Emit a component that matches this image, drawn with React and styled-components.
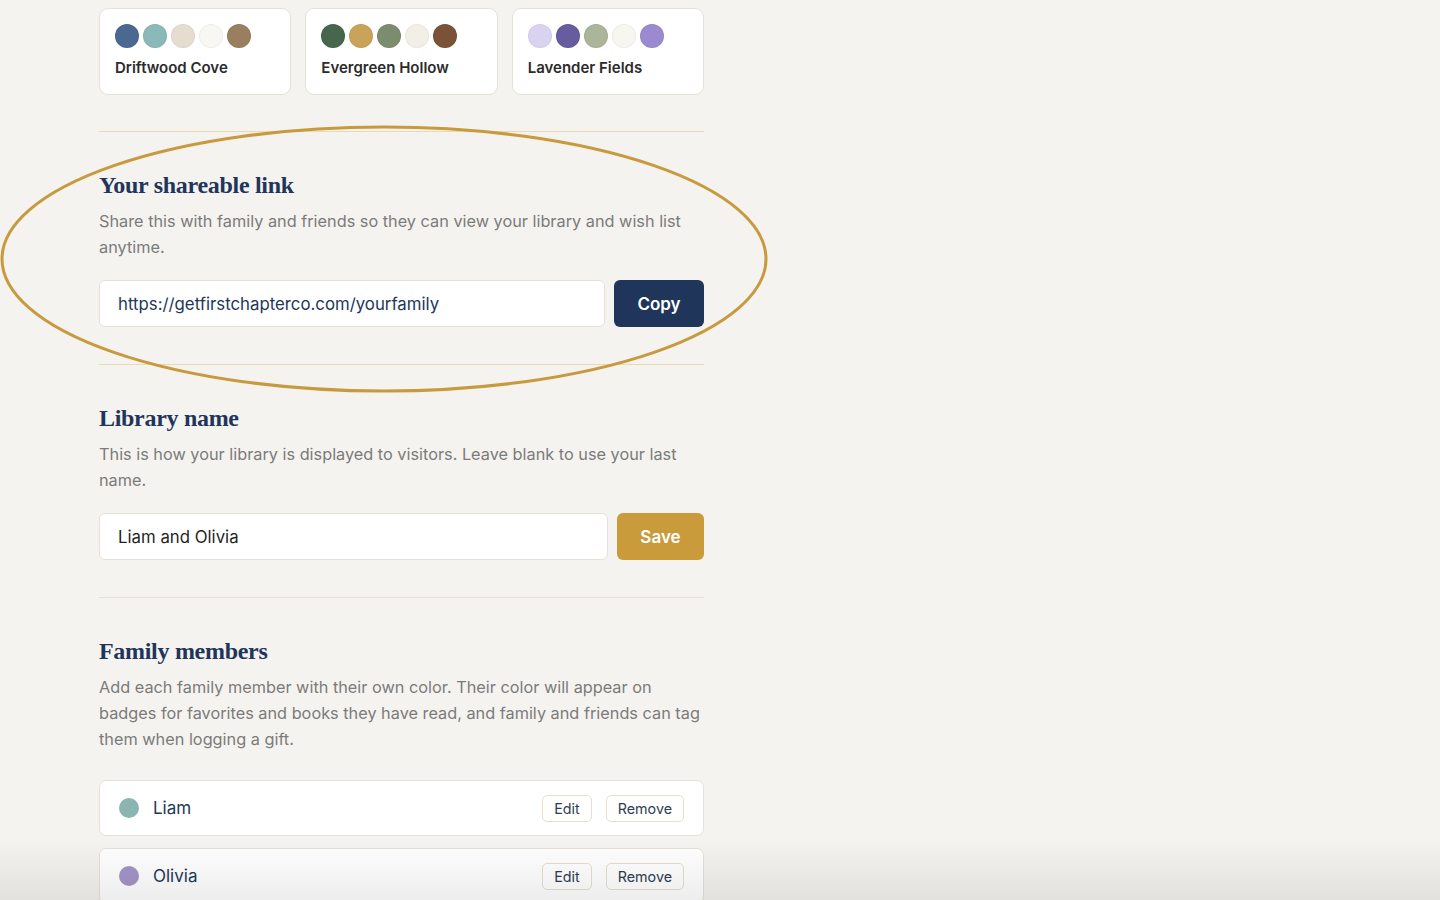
import React from "react";
import styled, { createGlobalStyle } from "styled-components";

const palettes = [
  { name: "Driftwood Cove", colors: ["#4a6890", "#8bb8b8", "#e6dccf", "#f8f7f4", "#9a7e60"] },
  { name: "Evergreen Hollow", colors: ["#46664e", "#c9a35a", "#7c8c6e", "#f1efe6", "#7a5238"] },
  { name: "Lavender Fields", colors: ["#d9d3ef", "#665c9e", "#aab59a", "#f8f6f0", "#9b8ad0"] },
];

const members = [
  { name: "Liam", color: "#8bb5b3" },
  { name: "Olivia", color: "#a395c9" },
];

const GlobalStyle = createGlobalStyle`
  * { box-sizing: border-box; }
  body {
    margin: 0;
    background: #f5f3ef;
    font-family: Inter, "Noto Sans", sans-serif;
    color: #2a2a2a;
  }
`;

const Page = styled.div`
  position: relative;
  width: 605px;
  margin-left: 99px;
  padding-top: 8px;
  padding-bottom: 60px;
`;

const PaletteRow = styled.div`
  display: grid;
  grid-template-columns: repeat(3, 1fr);
  gap: 14px;
`;

const PaletteCard = styled.div`
  height: 87px;
  background: #fff;
  border: 1px solid #e6e1d8;
  border-radius: 9px;
  padding: 15px 15px 0;
`;

const Swatches = styled.div`
  display: flex;
  gap: 4px;
  margin-bottom: 10px;
`;

const Swatch = styled.span`
  width: 24px;
  height: 24px;
  border-radius: 50%;
  background: ${(p) => p.$color};
  border: 1px solid rgba(0, 0, 0, 0.04);
`;

const PaletteName = styled.div`
  font-size: 15px;
  font-weight: 600;
  color: #2b2b2b;
`;

const Divider = styled.hr`
  border: none;
  height: 1px;
  margin: ${(p) => p.$top ?? 36}px 0 0;
  background: ${(p) => (p.$gold ? "#ebd9b4" : "#e6e1d8")};
`;

const Section = styled.section`
  padding-top: 38px;
  padding-bottom: 37px;
`;

const Heading = styled.h2`
  margin: 0 0 7px;
  font-family: "Liberation Serif", "DejaVu Serif", serif;
  font-size: 24px;
  line-height: 31px;
  font-weight: 700;
  letter-spacing: -0.3px;
  color: #1f355a;
`;

const Description = styled.p`
  margin: 0;
  font-size: 16.3px;
  line-height: 26px;
  color: #7b7b7b;
`;

const InputRow = styled.div`
  display: flex;
  gap: ${(p) => p.$gap}px;
  margin-top: 20px;
`;

const TextField = styled.div`
  flex: 1;
  height: 47px;
  display: flex;
  align-items: center;
  padding: 0 18px;
  background: #fff;
  border: 1px solid #e6e1d8;
  border-radius: 6px;
  font-size: 16.8px;
  color: ${(p) => p.$color || "#1f1f1f"};
`;

const ActionButton = styled.button`
  width: ${(p) => p.$width}px;
  height: 47px;
  border: none;
  border-radius: 6px;
  background: ${(p) => p.$bg};
  color: #fff;
  font-family: Inter, sans-serif;
  font-size: 17px;
  font-weight: 600;
`;

const MemberList = styled.div`
  display: flex;
  flex-direction: column;
  gap: 12px;
  margin-top: 28px;
`;

const MemberCard = styled.div`
  height: 56px;
  display: flex;
  align-items: center;
  padding: 0 19px;
  background: #fff;
  border: 1px solid #e6e1d8;
  border-radius: 7px;
`;

const Dot = styled.span`
  width: 20px;
  height: 20px;
  border-radius: 50%;
  background: ${(p) => p.$color};
  margin-right: 14px;
`;

const MemberName = styled.span`
  flex: 1;
  font-size: 17px;
  color: #24385a;
`;

const SmallButton = styled.button`
  height: 27px;
  padding: 0 11px;
  margin-left: ${(p) => p.$gap || 0}px;
  background: #fff;
  border: 1px solid #e6dfd2;
  border-radius: 5px;
  font-family: Inter, sans-serif;
  font-size: 14.3px;
  color: #2f3d52;
`;

const Annotation = styled.svg`
  position: absolute;
  left: -99px;
  top: 124px;
  pointer-events: none;
`;

const BottomFade = styled.div`
  position: fixed;
  left: 0;
  right: 0;
  bottom: 0;
  height: 60px;
  background: linear-gradient(rgba(0, 0, 0, 0), rgba(0, 0, 0, 0.07));
  pointer-events: none;
`;

export default function App() {
  return (
    <>
      <GlobalStyle />
      <Page>
        <PaletteRow>
          {palettes.map((p) => (
            <PaletteCard key={p.name}>
              <Swatches>
                {p.colors.map((c, i) => (
                  <Swatch key={i} $color={c} />
                ))}
              </Swatches>
              <PaletteName>{p.name}</PaletteName>
            </PaletteCard>
          ))}
        </PaletteRow>

        <Divider $gold />
        <Section>
          <Heading>Your shareable link</Heading>
          <Description>
            Share this with family and friends so they can view your library and wish list anytime.
          </Description>
          <InputRow $gap={9}>
            <TextField $color="#22365a">https://getfirstchapterco.com/yourfamily</TextField>
            <ActionButton $width={90} $bg="#1f3559">Copy</ActionButton>
          </InputRow>
        </Section>

        <Divider $gold $top={0} />
        <Section>
          <Heading>Library name</Heading>
          <Description>
            This is how your library is displayed to visitors. Leave blank to use your last name.
          </Description>
          <InputRow $gap={9}>
            <TextField>Liam and Olivia</TextField>
            <ActionButton $width={87} $bg="#c99b3b">Save</ActionButton>
          </InputRow>
        </Section>

        <Divider $top={0} />
        <Section>
          <Heading>Family members</Heading>
          <Description>
            Add each family member with their own color. Their color will appear on badges for
            favorites and books they have read, and family and friends can tag them when logging a
            gift.
          </Description>
          <MemberList>
            {members.map((m) => (
              <MemberCard key={m.name}>
                <Dot $color={m.color} />
                <MemberName>{m.name}</MemberName>
                <SmallButton>Edit</SmallButton>
                <SmallButton $gap={14}>Remove</SmallButton>
              </MemberCard>
            ))}
          </MemberList>
        </Section>

        {/* hand-drawn ring around the share link block */}
        <Annotation width="772" height="272" viewBox="0 0 772 272">
          <ellipse cx="384" cy="135" rx="382" ry="132" fill="none" stroke="#c79a3e" strokeWidth="3" />
        </Annotation>
      </Page>
      <BottomFade />
    </>
  );
}
